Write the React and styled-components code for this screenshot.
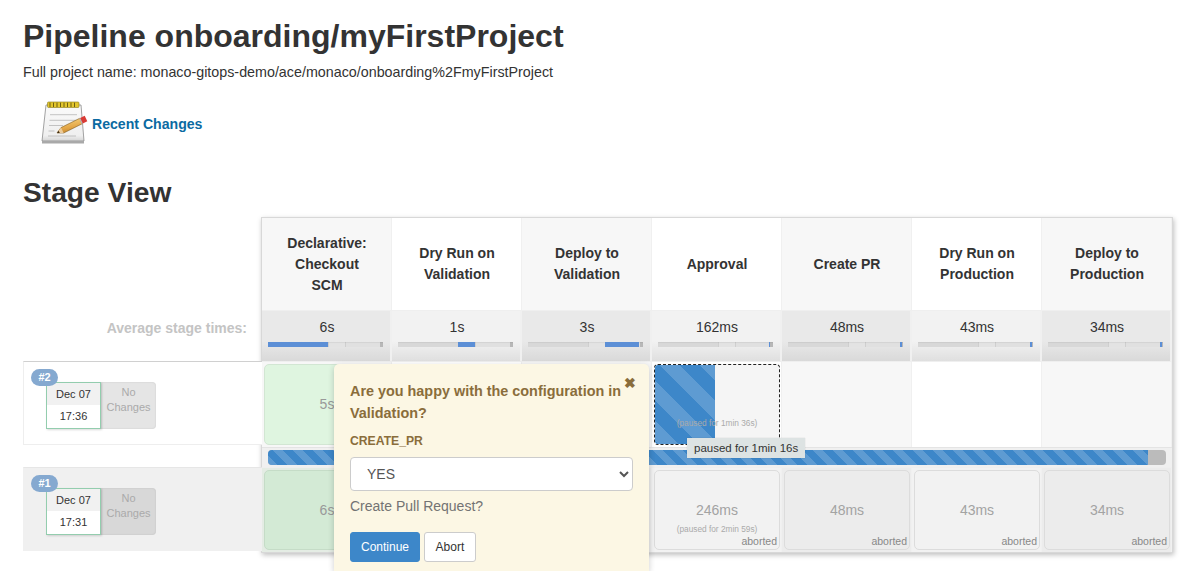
import React from "react";
import styled, { createGlobalStyle } from "styled-components";

const GlobalStyle = createGlobalStyle`
  html, body {
    margin: 0;
    height: 571px;
    overflow: hidden;
    background: #fff;
    font-family: "Liberation Sans", Arial, sans-serif;
    color: #333;
  }
`;

const Page = styled.div`
  padding: 0 14px 0 23px;
`;

const Title = styled.h1`
  margin: 0;
  padding-top: 17px;
  font-size: 32px;
  line-height: 38px;
  font-weight: 700;
  color: #333;
`;

const FullName = styled.div`
  margin-top: 8px;
  font-size: 14.3px;
  line-height: 18px;
  color: #333;
`;

const ChangesLink = styled.a`
  display: flex;
  align-items: center;
  gap: 4px;
  margin: 17px 0 0 17px;
  height: 52px;
  font-size: 14.1px;
  font-weight: 700;
  color: #0b6aa2;
`;

const SectionTitle = styled.h2`
  margin: 26px 0 0;
  font-size: 28.2px;
  line-height: 32px;
  font-weight: 700;
  color: #333;
`;

const StageView = styled.div`
  position: relative;
  display: flex;
  margin-top: 9px;
`;

const History = styled.div`
  width: 239px;
  flex: none;
`;

const HeadSpacer = styled.div`
  height: 93px;
`;

const AverageLabel = styled.div`
  height: 51px;
  padding: 10px 15px 0 0;
  box-sizing: border-box;
  text-align: right;
  font-size: 14px;
  line-height: 16px;
  font-weight: 700;
  color: #c4c4c4;
`;

const HistoryRow = styled.div`
  position: relative;
  display: flex;
  box-sizing: border-box;
  height: 84px;
  margin-top: ${(p) => p.$gap}px;
  padding: 20px 0 0 22px;
  background: ${(p) => (p.$shaded ? "#f0f0f0" : "#fff")};
  border-top: 1px solid ${(p) => (p.$shaded ? "#e6e6e6" : "#d0d0d0")};
  border-bottom: 1px solid ${(p) => (p.$shaded ? "#f0f0f0" : "#eee")};
  border-left: 1px solid ${(p) => (p.$shaded ? "#f0f0f0" : "#eee")};
`;

const BuildBadge = styled.span`
  position: absolute;
  left: 7px;
  top: 7px;
  width: 27px;
  height: 17px;
  border-radius: 9px;
  background: #85a9d0;
  color: #fff;
  font-size: 11px;
  line-height: 17px;
  font-weight: 700;
  text-align: center;
  z-index: 2;
`;

const DateCard = styled.div`
  position: relative;
  width: 55px;
  height: 47px;
  box-sizing: border-box;
  border: 1px solid #93cdae;
  background: #fff;
  box-shadow: 1px 1px 2px rgba(0, 0, 0, 0.15);
  font-size: 11px;
  text-align: center;
  color: #333;
  z-index: 1;
`;

const DateLine = styled.div`
  height: 22px;
  line-height: 23px;
  background: #f1f1f1;
`;

const TimeLine = styled.div`
  line-height: 23px;
`;

const NoChanges = styled.div`
  width: 55px;
  height: 47px;
  box-sizing: border-box;
  padding-top: 3px;
  border-radius: 0 4px 4px 0;
  background: ${(p) => (p.$shaded ? "#d8d8d8" : "#e5e5e5")};
  box-shadow: inset 0 0 2px rgba(0, 0, 0, 0.12);
  font-size: 11px;
  line-height: 15px;
  text-align: center;
  color: #aaa;
`;

const Table = styled.div`
  width: 912px;
  flex: none;
  margin-left: -1px;
  box-sizing: border-box;
  border: 1px solid #d8d8d8;
  box-shadow: 1px 2px 5px rgba(0, 0, 0, 0.25);
  background: #efefef;
`;

const Columns = styled.div`
  display: grid;
  grid-template-columns: repeat(7, 130px);
`;

const HeadCell = styled.div`
  display: flex;
  align-items: center;
  justify-content: center;
  height: 92px;
  padding: 0 20px;
  box-sizing: border-box;
  background: ${(p) => (p.$odd ? "#f7f7f7" : "#fff")};
  box-shadow: inset -1px 0 0 #f0f0f0;
  text-align: center;
  font-size: 14px;
  line-height: 21px;
  font-weight: 700;
  color: #333;
`;

const AverageCell = styled.div`
  height: 50px;
  box-sizing: border-box;
  margin-top: 1px;
  padding: 8px 6px 0;
  box-shadow: inset -2px 0 0 #f0f0f0;
  background: linear-gradient(
    to bottom,
    ${(p) => (p.$odd ? "#e9e9e9" : "#f2f2f2")} 60%,
    ${(p) => (p.$odd ? "#d9d9d9" : "#dfdfdf")} 100%
  );
  text-align: center;
  font-size: 14px;
  line-height: 17px;
  color: #333;
`;

const Track = styled.div`
  position: relative;
  height: 5px;
  margin: 6px 3px 0 0;
  background: linear-gradient(
    to right,
    #d8d8d8 0 52%,
    #cfcfcf 52% 52.8%,
    #e3e3e3 52.8% 66.6%,
    #cfcfcf 66.6% 67.4%,
    #e0e0e0 67.4% 97%,
    #b8b8b8 97% 100%
  );
  box-shadow: inset 0 1px 1px rgba(0, 0, 0, 0.06);
`;

const TrackFill = styled.div`
  position: absolute;
  top: 0;
  bottom: 0;
  background: #5c8fd6;
`;

const StageCol = styled.div`
  height: ${(p) => p.$height}px;
  box-sizing: border-box;
  padding: 2px 2px 2px 2px;
  margin-top: 1px;
  background: ${(p) => p.$bg};
  box-shadow: inset -1px 0 0 #f0f0f0;
`;

const StageBox = styled.div`
  position: relative;
  display: flex;
  align-items: center;
  justify-content: center;
  height: 100%;
  padding-bottom: 1px;
  box-sizing: border-box;
  border: 1px solid ${(p) => p.$border};
  border-radius: 5px;
  background: ${(p) => p.$bg};
  font-size: 14px;
  color: ${(p) => p.$color};
`;

const PausedBox = styled.div`
  position: relative;
  height: 100%;
  box-sizing: border-box;
  border: 1px dashed #222;
  border-radius: 4px;
  background: #f5f5f5;
  overflow: hidden;
`;

const PausedFill = styled.div`
  position: absolute;
  left: 0;
  top: 0;
  bottom: 0;
  width: 60px;
  background-color: #3d87c9;
  background-image: linear-gradient(
    45deg,
    rgba(255, 255, 255, 0.17) 25%,
    transparent 25% 50%,
    rgba(255, 255, 255, 0.17) 50% 75%,
    transparent 75%
  );
  background-size: 40px 40px;
  background-position: 5px 0;
`;

const PausedNote = styled.div`
  position: absolute;
  left: 0;
  right: 0;
  top: 53px;
  text-align: center;
  font-size: 8.3px;
  line-height: 10px;
  color: #aaa;
`;

const Aborted = styled.span`
  position: absolute;
  right: 2px;
  bottom: 2px;
  font-size: 10.5px;
  line-height: 12px;
  color: #888;
`;

const ProgressRow = styled.div`
  display: flex;
  align-items: center;
  height: 20px;
  box-sizing: border-box;
  padding: 0 6px;
  border-top: 1px solid #e4e4e4;
  background: #f0f0f0;
`;

const ProgressTrack = styled.div`
  width: 898px;
  height: 15px;
  border-radius: 4px;
  background: #bbb;
  overflow: hidden;
`;

const ProgressFill = styled.div`
  height: 100%;
  background-color: #3d87c9;
  background-image: linear-gradient(
    45deg,
    rgba(255, 255, 255, 0.17) 25%,
    transparent 25% 50%,
    rgba(255, 255, 255, 0.17) 50% 75%,
    transparent 75%
  );
  background-size: 20px 20px;
  background-position: 5px 0;
`;

const Tooltip = styled.div`
  position: absolute;
  left: 664px;
  top: 221px;
  height: 20px;
  padding: 0 7px;
  background: #dde3e3;
  font-size: 11.5px;
  line-height: 20px;
  color: #333;
  white-space: nowrap;
  box-shadow: 0 0 1px rgba(0, 0, 0, 0.2);
  z-index: 3;
`;

const Popover = styled.div`
  position: absolute;
  left: 311px;
  top: 147px;
  width: 315px;
  height: 207px;
  box-sizing: border-box;
  padding: 16px 16px 0;
  border-radius: 5px 5px 0 0;
  background: #fcf7e4;
  box-shadow: 0 2px 6px rgba(0, 0, 0, 0.2);
  color: #8a6d3b;
  z-index: 4;
`;

const CloseButton = styled.span`
  position: absolute;
  right: 13px;
  top: 11px;
  font-size: 14px;
  line-height: 16px;
  font-weight: 700;
  color: #8a6d3b;
`;

const Question = styled.div`
  font-size: 14.4px;
  line-height: 22px;
  font-weight: 700;
`;

const FieldLabel = styled.div`
  margin-top: 9px;
  font-size: 12.2px;
  line-height: 16px;
  font-weight: 700;
`;

const Select = styled.select`
  display: block;
  width: 283px;
  height: 34px;
  margin-top: 8px;
  padding: 0 12px;
  box-sizing: border-box;
  border: 1px solid #ccc;
  border-radius: 4px;
  background: #fff;
  font-family: inherit;
  font-size: 14px;
  color: #555;
`;

const FieldHelp = styled.div`
  margin-top: 5px;
  font-size: 14px;
  line-height: 20px;
  color: #737373;
`;

const Buttons = styled.div`
  display: flex;
  gap: 4px;
  margin-top: 16px;
`;

const Button = styled.button`
  height: 30px;
  padding: 0 ${(p) => (p.$primary ? "10px" : "10.5px")};
  box-sizing: border-box;
  border: 1px solid ${(p) => (p.$primary ? "#3d87c9" : "#ccc")};
  border-radius: 3px;
  background: ${(p) => (p.$primary ? "#3d87c9" : "#fff")};
  color: ${(p) => (p.$primary ? "#fff" : "#333")};
  font-family: inherit;
  font-size: 12px;
`;

const NotepadIcon = () => (
  <svg width="48" height="48" viewBox="0 0 48 48">
    <defs>
      <linearGradient id="pad" x1="0" y1="0" x2="0" y2="1">
        <stop offset="0" stopColor="#fafafa" />
        <stop offset="0.85" stopColor="#efefef" />
        <stop offset="1" stopColor="#d5d5d5" />
      </linearGradient>
      <linearGradient id="pencil" x1="0.5" y1="0" x2="0.75" y2="1">
        <stop offset="0" stopColor="#f5cf78" />
        <stop offset="0.6" stopColor="#e3a545" />
        <stop offset="1" stopColor="#b9802c" />
      </linearGradient>
    </defs>
    <path d="M6 5h35l3 36H2z" fill="url(#pad)" stroke="#8c8c8c" strokeWidth="0.8" />
    <path d="M2 41h42v2.5H2z" fill="#a9a9a9" />
    <rect x="7.5" y="2" width="31.5" height="5.5" rx="1" fill="#e3c62d" stroke="#8a7a1a" strokeWidth="0.6" />
    <path
      d="M10 2.6v4.4M13.5 2.6v4.4M17 2.6v4.4M20.5 2.6v4.4M24 2.6v4.4M27.5 2.6v4.4M31 2.6v4.4M34.5 2.6v4.4"
      stroke="#6d5f12"
      strokeWidth="1"
    />
    <path
      d="M10 14.7h27M9.5 20.3h27M9 25.5h14M8.5 31h6M8 36h28"
      stroke="#b5b5b5"
      strokeWidth="0.8"
    />
    <path d="M17 33l4-5.4L39.7 18.3l2.6 5.4L23.7 33z" fill="url(#pencil)" stroke="#7d5a20" strokeWidth="0.6" />
    <path d="M17 33l4-5.4 2.7 5.4z" fill="#eccb9a" />
    <path d="M17 33l1.6-2.2 1.2 2.2z" fill="#3d2a12" />
    <path d="M39.7 18.3l5-2.5 2.6 5.4-5 2.5z" fill="#d93a35" />
    <path d="M39.7 18.3l2.6 5.4" stroke="#b8b8b8" strokeWidth="1.2" />
  </svg>
);

const columns = [
  { name: "Declarative: Checkout SCM", avg: "6s", fill: [0, 52] },
  { name: "Dry Run on Validation", avg: "1s", fill: [52, 67] },
  { name: "Deploy to Validation", avg: "3s", fill: [67, 96.5] },
  { name: "Approval", avg: "162ms", fill: [96.5, 97.4] },
  { name: "Create PR", avg: "48ms", fill: [97.8, 98.8] },
  { name: "Dry Run on Production", avg: "43ms", fill: [97.8, 98.8] },
  { name: "Deploy to Production", avg: "34ms", fill: [97.8, 98.8] },
];

const abortedCells = [
  { time: "246ms", note: "(paused for 2min 59s)" },
  { time: "48ms" },
  { time: "43ms" },
  { time: "34ms" },
];

const App = () => {
  return (
    <Page>
      <GlobalStyle />
      <Title>Pipeline onboarding/myFirstProject</Title>
      <FullName>Full project name: monaco-gitops-demo/ace/monaco/onboarding%2FmyFirstProject</FullName>
      <ChangesLink>
        <NotepadIcon />
        Recent Changes
      </ChangesLink>
      <SectionTitle>Stage View</SectionTitle>
      <StageView>
        <History>
          <HeadSpacer />
          <AverageLabel>Average stage times:</AverageLabel>
          <HistoryRow $gap={0}>
            <BuildBadge>#2</BuildBadge>
            <DateCard>
              <DateLine>Dec 07</DateLine>
              <TimeLine>17:36</TimeLine>
            </DateCard>
            <NoChanges>No Changes</NoChanges>
          </HistoryRow>
          <HistoryRow $gap={22} $shaded>
            <BuildBadge>#1</BuildBadge>
            <DateCard>
              <DateLine>Dec 07</DateLine>
              <TimeLine>17:31</TimeLine>
            </DateCard>
            <NoChanges $shaded>No Changes</NoChanges>
          </HistoryRow>
        </History>
        <Table>
          <Columns>
            {columns.map((c, i) => (
              <HeadCell key={c.name} $odd={i % 2 === 0}>
                {c.name}
              </HeadCell>
            ))}
            {columns.map((c, i) => (
              <AverageCell key={c.name} $odd={i % 2 === 0}>
                {c.avg}
                <Track>
                  <TrackFill style={{ left: `${c.fill[0]}%`, width: `${c.fill[1] - c.fill[0]}%` }} />
                </Track>
              </AverageCell>
            ))}
            <StageCol $height={85} $bg="#f7f7f7">
              <StageBox $bg="#dff5e0" $border="#d2e6d3" $color="#999">5s</StageBox>
            </StageCol>
            <StageCol $height={85} $bg="#fff" />
            <StageCol $height={85} $bg="#f7f7f7" />
            <StageCol $height={85} $bg="#fff">
              <PausedBox>
                <PausedFill />
                <PausedNote>(paused for 1min 36s)</PausedNote>
              </PausedBox>
            </StageCol>
            <StageCol $height={85} $bg="#f7f7f7" />
            <StageCol $height={85} $bg="#fff" />
            <StageCol $height={85} $bg="#f7f7f7" />
          </Columns>
          <ProgressRow>
            <ProgressTrack>
              <ProgressFill style={{ width: "880px" }} />
            </ProgressTrack>
          </ProgressRow>
          <Columns>
            <StageCol $height={84} $bg="#e4ece4">
              <StageBox $bg="#d3ead5" $border="#c5dcc7" $color="#999">6s</StageBox>
            </StageCol>
            <StageCol $height={84} $bg="#f2f2f2" />
            <StageCol $height={84} $bg="#ececec" />
            {abortedCells.map((c, i) => (
              <StageCol key={c.time} $height={84} $bg={i % 2 === 0 ? "#f2f2f2" : "#ececec"}>
                <StageBox
                  $bg={i % 2 === 0 ? "#f2f2f2" : "#ececec"}
                  $border="#dcdcdc"
                  $color="#a3a3a3"
                >
                  {c.time}
                  {c.note && <PausedNote>{c.note}</PausedNote>}
                  <Aborted>aborted</Aborted>
                </StageBox>
              </StageCol>
            ))}
          </Columns>
        </Table>
        <Tooltip>paused for 1min 16s</Tooltip>
        <Popover>
          <CloseButton>✖</CloseButton>
          <Question>Are you happy with the configuration in Validation?</Question>
          <FieldLabel>CREATE_PR</FieldLabel>
          <Select defaultValue="YES">
            <option>YES</option>
          </Select>
          <FieldHelp>Create Pull Request?</FieldHelp>
          <Buttons>
            <Button $primary>Continue</Button>
            <Button>Abort</Button>
          </Buttons>
        </Popover>
      </StageView>
    </Page>
  );
};

export default App;
